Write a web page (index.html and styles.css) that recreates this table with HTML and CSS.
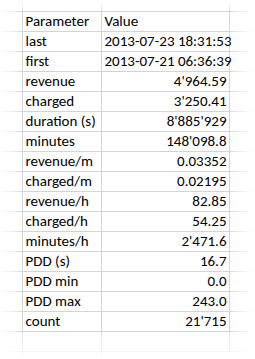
FILE: index.html
```html
<!DOCTYPE html>
<html>
<head>
<meta charset="utf-8">
<link rel="stylesheet" href="styles.css">
</head>
<body>
<div class="sheet">
  <table class="grid">
    <colgroup>
      <col class="c0"><col class="ca"><col class="cb"><col class="cc">
    </colgroup>
    <tr class="spacer"><td></td><td></td><td></td><td></td></tr>
    <tr><td></td><td>Parameter</td><td>Value</td><td></td></tr>
    <tr><td></td><td>last</td><td class="num">2013-07-23 18:31:53</td><td></td></tr>
    <tr><td></td><td>first</td><td class="num">2013-07-21 06:36:39</td><td></td></tr>
    <tr><td></td><td>revenue</td><td class="num">4'964.59</td><td></td></tr>
    <tr><td></td><td>charged</td><td class="num">3'250.41</td><td></td></tr>
    <tr><td></td><td>duration (s)</td><td class="num">8'885'929</td><td></td></tr>
    <tr><td></td><td>minutes</td><td class="num">148'098.8</td><td></td></tr>
    <tr><td></td><td>revenue/m</td><td class="num">0.03352</td><td></td></tr>
    <tr><td></td><td>charged/m</td><td class="num">0.02195</td><td></td></tr>
    <tr><td></td><td>revenue/h</td><td class="num">82.85</td><td></td></tr>
    <tr><td></td><td>charged/h</td><td class="num">54.25</td><td></td></tr>
    <tr><td></td><td>minutes/h</td><td class="num">2'471.6</td><td></td></tr>
    <tr><td></td><td>PDD (s)</td><td class="num">16.7</td><td></td></tr>
    <tr><td></td><td>PDD min</td><td class="num">0.0</td><td></td></tr>
    <tr><td></td><td>PDD max</td><td class="num">243.0</td><td></td></tr>
    <tr><td></td><td>count</td><td class="num">21'715</td><td></td></tr>
    <tr><td></td><td></td><td></td><td></td></tr>
    <tr><td></td><td></td><td></td><td></td></tr>
  </table>
  <div class="fade fade-top"></div>
  <div class="fade fade-left"></div>
  <div class="fade fade-right"></div>
  <div class="fade fade-bottom"></div>
</div>
</body>
</html>
```

FILE: styles.css
```css
html, body {
  margin: 0;
  padding: 0;
  background: #ffffff;
}
.sheet {
  position: relative;
  width: 255px;
  height: 359px;
  overflow: hidden;
  font-family: "Carlito", "Liberation Sans", Arial, sans-serif;
  font-size: 15px;
  color: #000;
}
.grid {
  border-collapse: collapse;
  table-layout: fixed;
  width: 300px;
}
.c0 { width: 22px; }
.ca { width: 79px; }
.cb { width: 128px; }
.cc { width: 71px; }
.grid td {
  height: 19px;
  padding: 0 2px 0 3px;
  border-right: 1px solid #d4d4d4;
  border-bottom: 1px solid #d4d4d4;
  line-height: 19px;
  white-space: nowrap;
  overflow: visible;
  box-sizing: content-box;
  vertical-align: bottom;
}
.grid td:first-child { padding: 0; }
.grid tr.spacer td { height: 11px; line-height: 11px; }
.grid td.num {
  text-align: right;
  padding-right: 2px;
}
.fade { position: absolute; pointer-events: none; }
.fade-top {
  left: 0; right: 0; top: 0; height: 12px;
  background: linear-gradient(to bottom, #fff 0%, rgba(255,255,255,0.6) 60%, rgba(255,255,255,0) 100%);
}
.fade-left {
  left: 0; top: 0; bottom: 0; width: 22px;
  background: linear-gradient(to right, #fff 0%, rgba(255,255,255,0.5) 70%, rgba(255,255,255,0) 100%);
}
.fade-right {
  right: 0; top: 0; bottom: 0; width: 26px;
  background: linear-gradient(to right, rgba(255,255,255,0) 0%, rgba(255,255,255,0.6) 40%, #fff 100%);
}
.fade-bottom {
  left: 0; right: 0; top: 332px; bottom: 0;
  background: linear-gradient(to bottom, rgba(255,255,255,0.4) 0%, rgba(255,255,255,0.75) 70%, #fff 100%);
}
```
